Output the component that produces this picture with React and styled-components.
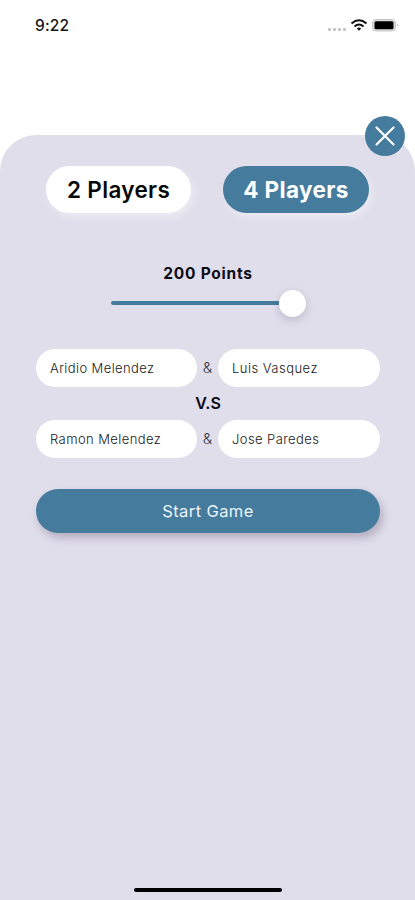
import React from "react";
import styled, { createGlobalStyle } from "styled-components";

const BLUE = "#457b9d";
const LAVENDER = "#e0deeb";

const GlobalStyle = createGlobalStyle`
  * { box-sizing: border-box; }
  body { margin: 0; background: #fff; font-family: Inter, "Open Sans", sans-serif; }
  button { font: inherit; border: 0; padding: 0; }
`;

const Screen = styled.div`
  width: 415px;
  height: 900px;
  display: flex;
  flex-direction: column;
  background: #fff;
  overflow: hidden;
`;

const StatusBar = styled.header`
  height: 135px;
  flex: none;
  display: flex;
  justify-content: space-between;
  align-items: flex-start;
  padding: 16px 15px 0 35px;
`;

const Clock = styled.span`
  font-size: 15.5px;
  line-height: 20px;
  font-weight: 500;
  color: #161616;
  letter-spacing: 0.15px;
`;

const StatusIcons = styled.svg`
  display: block;
  width: 74px;
  height: 20px;
`;

const Sheet = styled.main`
  position: relative;
  flex: 1;
  display: flex;
  flex-direction: column;
  align-items: stretch;
  padding: 31px 35px 0 36px;
  border-radius: 36px 36px 0 0;
  background: ${LAVENDER};
`;

const CloseButton = styled.button`
  position: absolute;
  top: -19px;
  right: 10px;
  width: 40px;
  height: 40px;
  border-radius: 50%;
  background: ${BLUE};
  svg { display: block; width: 40px; height: 40px; }
`;

const ModeSwitch = styled.div`
  display: flex;
  justify-content: space-between;
  padding: 0 11px 0 10px;
`;

const ModeButton = styled.button`
  width: ${(p) => (p.$active ? 146 : 145)}px;
  height: 47px;
  border-radius: 24px;
  font-size: 22.5px;
  line-height: 47px;
  font-weight: ${(p) => (p.$active ? 700 : 600)};
  letter-spacing: 0.35px;
  white-space: nowrap;
  color: ${(p) => (p.$active ? "#fff" : "#080808")};
  background: ${(p) => (p.$active ? BLUE : "#fff")};
  box-shadow: 3px 4px 8px rgba(255, 255, 255, 0.4);
`;

const PointsLabel = styled.div`
  margin-top: 51px;
  height: 20px;
  line-height: 20px;
  text-align: center;
  font-size: 15.5px;
  font-weight: 700;
  letter-spacing: 0.75px;
  color: #0d0c16;
`;

const Slider = styled.div`
  display: flex;
  align-items: center;
  align-self: center;
  width: 195px;
  height: 28px;
  margin-top: 5px;
`;

const SliderTrack = styled.div`
  width: 168px;
  height: 4px;
  border-radius: 2px 0 0 2px;
  background: ${BLUE};
`;

const SliderThumb = styled.div`
  width: 27px;
  height: 27px;
  border-radius: 50%;
  background: #fff;
  box-shadow: 0 3px 8px rgba(50, 40, 70, 0.2);
`;

const Teams = styled.section`
  margin-top: 32px;
`;

const TeamRow = styled.div`
  display: grid;
  grid-template-columns: 161px 1fr 162px;
  align-items: center;
  height: 38px;
`;

const PlayerField = styled.div`
  height: 38px;
  padding-left: 14px;
  border-radius: 19px;
  background: #fff;
  font-size: 13px;
  line-height: 38px;
  font-weight: 300;
  letter-spacing: ${(p) => p.$spacing}px;
  color: #202020;
`;

const Ampersand = styled.span`
  text-align: center;
  font-size: 15px;
  font-weight: 300;
  line-height: 36px;
  color: #363442;
`;

const Versus = styled.div`
  height: 33px;
  line-height: 33px;
  text-align: center;
  font-size: 16px;
  font-weight: 600;
  color: #0b0a14;
`;

const StartButton = styled.button`
  height: 44px;
  margin-top: 31px;
  border-radius: 22px;
  background: ${BLUE};
  color: #eaf6fc;
  font-size: 16.5px;
  line-height: 44px;
  font-weight: 400;
  letter-spacing: 0.4px;
  box-shadow: 3px 5px 8px rgba(65, 50, 80, 0.28);
`;

const HomeIndicator = styled.div`
  width: 148px;
  height: 4px;
  margin: auto auto 8px;
  border-radius: 2px;
  background: #000;
`;

const teams = [
  [{ name: "Aridio Melendez", spacing: 0.4 }, { name: "Luis Vasquez", spacing: 0.48 }],
  [{ name: "Ramon Melendez", spacing: 0.42 }, { name: "Jose Paredes", spacing: 0.42 }],
];

function Team({ players }) {
  return (
    <TeamRow>
      <PlayerField $spacing={players[0].spacing}>{players[0].name}</PlayerField>
      <Ampersand>&amp;</Ampersand>
      <PlayerField $spacing={players[1].spacing}>{players[1].name}</PlayerField>
    </TeamRow>
  );
}

export default function App() {
  return (
    <Screen>
      <GlobalStyle />
      <StatusBar>
        <Clock>9:22</Clock>
        <StatusIcons viewBox="0 0 74 20" aria-hidden="true">
          <g fill="#c4c4c4">
            <rect x="2" y="12" width="3" height="3" rx="1" />
            <rect x="7" y="12" width="3" height="3" rx="1" />
            <rect x="12" y="12" width="3" height="3" rx="1" />
            <rect x="17" y="12" width="3" height="3" rx="1" />
          </g>
          <g fill="none" stroke="#111" strokeWidth="2">
            <path d="M25.5 7.4Q33 1 40.5 7.4" />
            <path d="M28.5 10.4Q33 6.7 37.5 10.4" />
          </g>
          <path d="M30.8 12.4Q33 10.8 35.2 12.4L33 14.8Z" fill="#111" />
          <rect x="46.5" y="3.5" width="23" height="11.5" rx="3.5" fill="#ddd" stroke="#c8c8c8" />
          <rect x="48.5" y="5.2" width="19" height="8" rx="1.5" fill="#000" />
          <path d="M71 7.5Q73 9.2 71 11Z" fill="#bbb" />
        </StatusIcons>
      </StatusBar>
      <Sheet>
        <CloseButton aria-label="Close">
          <svg viewBox="0 0 40 40">
            <path d="M11.5 11.5L28.500 28.500M28.500 11.500L11.500 28.500" stroke="#fff" strokeWidth="2.2" strokeLinecap="round" />
          </svg>
        </CloseButton>
        <ModeSwitch>
          <ModeButton>2 Players</ModeButton>
          <ModeButton $active>4 Players</ModeButton>
        </ModeSwitch>
        <PointsLabel>200 Points</PointsLabel>
        <Slider>
          <SliderTrack />
          <SliderThumb />
        </Slider>
        <Teams>
          <Team players={teams[0]} />
          <Versus>V.S</Versus>
          <Team players={teams[1]} />
        </Teams>
        <StartButton>Start Game</StartButton>
        <HomeIndicator />
      </Sheet>
    </Screen>
  );
}
